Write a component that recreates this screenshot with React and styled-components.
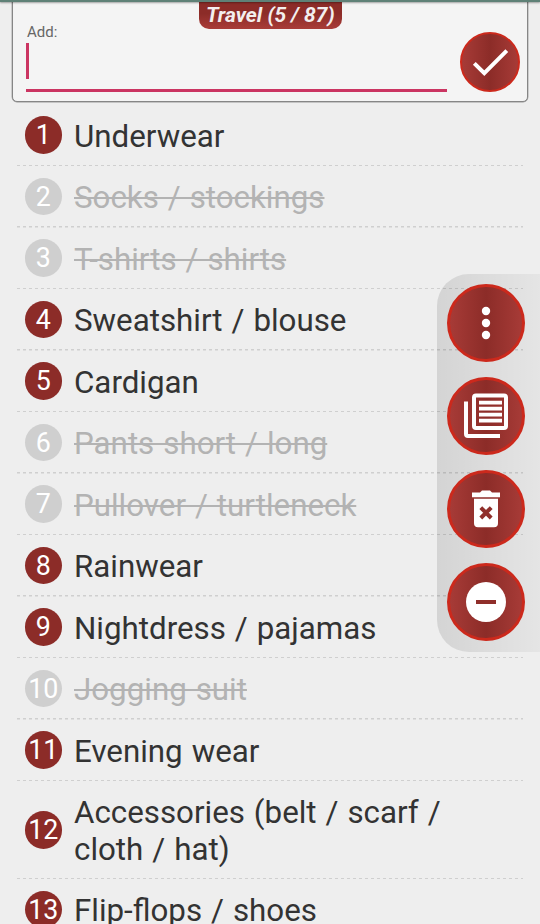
import React from "react";
import styled, { createGlobalStyle } from "styled-components";

const GlobalStyle = createGlobalStyle`
  html, body { margin: 0; padding: 0; background: #eeeeee; overflow: hidden; }
  * { box-sizing: border-box; }
`;

const Screen = styled.main`
  position: relative;
  width: 540px;
  height: 924px;
  overflow: hidden;
  background: #eeeeee;
  font-family: Roboto, sans-serif;
  color: #333;
`;

const StatusEdge = styled.div`
  position: absolute;
  inset: 0 0 auto;
  height: 1.5px;
  background: #5f8177;
  box-shadow: 0 1px 2px rgba(0, 0, 0, 0.35);
  z-index: 2;
`;

const AddPanel = styled.header`
  position: relative;
  display: flex;
  justify-content: space-between;
  width: 516px;
  height: 102px;
  margin-left: 12px;
  padding: 24px 6.6px 0 13px;
  background: #f4f4f4;
  border: 1.5px solid #868686;
  border-radius: 0 0 5px 5px;
  box-shadow: 0 0 0 0.4px #999;
`;

const Badge = styled.div`
  position: absolute;
  top: 0;
  left: 186px;
  width: 142.5px;
  height: 28px;
  border-radius: 0 0 10px 10px;
  background: linear-gradient(#8c2c28 45%, #a93c38);
  color: #f3eeee;
  font: italic 700 21px/29px Roboto, sans-serif;
  text-align: center;
  white-space: nowrap;
`;

const Field = styled.label`
  display: flex;
  flex-direction: column;
  width: 421px;
  height: 67px;
  border-bottom: 3px solid #cb3562;
`;

const FieldLabel = styled.span`
  padding-left: 1px;
  font-size: 15px;
  line-height: 15px;
  color: #666;
`;

const Caret = styled.span`
  width: 2.5px;
  height: 36px;
  margin-top: 3px;
  background: #cb3562;
`;

const RoundButton = styled.button`
  display: block;
  flex: none;
  width: ${(p) => p.$size}px;
  height: ${(p) => p.$size}px;
  padding: 0;
  border: ${(p) => p.$edge}px solid #cc291c;
  border-radius: 50%;
  background: linear-gradient(90deg, #a93c38, #8c2c28 50%, #a93c38) border-box;

  svg {
    display: block;
    margin: -${(p) => p.$edge}px;
  }
`;

const ConfirmButton = styled(RoundButton)`
  margin-top: 6.8px;
`;

const List = styled.ol`
  list-style: none;
  margin: 2.75px 0 0 17px;
  padding: 0;
  width: 506px;
`;

const Item = styled.li`
  display: flex;
  align-items: center;
  height: ${(p) => (p.$tall ? 98 : 61.5)}px;
  padding: 0 60px 0 7.5px;
  background: repeating-linear-gradient(90deg, #cfcfcf 0 3px, transparent 3px 6px)
    0 100% / 100% 1.5px no-repeat;
`;

const Num = styled.span`
  flex: none;
  width: 37.5px;
  height: 37.5px;
  margin-bottom: 1px;
  border-radius: 50%;
  background: ${(p) => (p.$done ? "#cfcfcf" : "#8c2c28")};
  color: #fff;
  font-size: 26.8px;
  line-height: 38px;
  text-align: center;
`;

const Title = styled.span`
  margin: 3px 0 0 12px;
  font-size: 31.3px;
  line-height: 36.5px;
  word-spacing: 1.2px;
  color: ${(p) => (p.$done ? "#b3b3b3" : "#333")};
  text-decoration: ${(p) => (p.$done ? "line-through 2px" : "none")};
`;

const ActionPanel = styled.aside`
  position: absolute;
  top: 274px;
  right: 0;
  display: flex;
  flex-direction: column;
  gap: 15px;
  width: 103.5px;
  height: 377.5px;
  padding: 10.3px 0 0 10.4px;
  border-radius: 32px 0 0 32px;
  background: linear-gradient(90deg, rgba(0, 0, 0, 0.11), rgba(0, 0, 0, 0.04));
`;

const items = [
  ["Underwear", false],
  ["Socks / stockings", true],
  ["T-shirts / shirts", true],
  ["Sweatshirt / blouse", false],
  ["Cardigan", false],
  ["Pants short / long", true],
  ["Pullover / turtleneck", true],
  ["Rainwear", false],
  ["Nightdress / pajamas", false],
  ["Jogging suit", true],
  ["Evening wear", false],
  ["Accessories (belt / scarf / cloth / hat)", false, true],
  ["Flip-flops / shoes", false],
];

const actions = [
  {
    label: "More",
    icon: (
      <g fill="#fff">
        <circle cx="39" cy="27" r="4.2" />
        <circle cx="39" cy="39" r="4.2" />
        <circle cx="39" cy="51" r="4.2" />
      </g>
    ),
  },
  {
    label: "Lists",
    icon: (
      <g fill="none" stroke="#fff" strokeWidth="4">
        <rect x="27" y="18.6" width="32" height="32.4" rx="2" />
        <path d="M19 24.6V57a2 2 0 0 0 2 2H53" />
        <path d="M32 25.6H55M32 31.6H55M32 37.6H55M32 43.6H55" strokeWidth="3.8" />
      </g>
    ),
  },
  {
    label: "Delete",
    icon: (
      <g>
        <path
          fill="#fff"
          d="M25 22.5H33L35 20.4H43L45 22.5H53V27.3H25ZM27 28.8H51V53.2a4 4 0 0 1-4 4H31a4 4 0 0 1-4-4Z"
        />
        <path d="M33.8 37.6 44.2 48M44.2 37.6 33.8 48" stroke="#8f2e2a" strokeWidth="4" />
      </g>
    ),
  },
  {
    label: "Remove",
    icon: (
      <g>
        <circle cx="39" cy="39" r="20" fill="#fff" />
        <path d="M29 39H49" stroke="#8f2e2a" strokeWidth="4" />
      </g>
    ),
  },
];

export default function App() {
  return (
    <Screen>
      <GlobalStyle />
      <StatusEdge />
      <AddPanel>
        <Field>
          <FieldLabel>Add:</FieldLabel>
          <Caret />
        </Field>
        <ConfirmButton $size={60} $edge={2.5} aria-label="Confirm">
          <svg width="60" height="60" viewBox="0 0 60 60">
            <path d="M14.3 31.3 24.3 41.2 46.8 18.7" fill="none" stroke="#fff" strokeWidth="4" />
          </svg>
        </ConfirmButton>
        <Badge>Travel (5 / 87)</Badge>
      </AddPanel>
      <List>
        {items.map(([name, done, tall], i) => (
          <Item key={name} $tall={tall}>
            <Num $done={done}>{i + 1}</Num>
            <Title $done={done}>{name}</Title>
          </Item>
        ))}
      </List>
      <ActionPanel>
        {actions.map((a) => (
          <RoundButton key={a.label} $size={78} $edge={3} aria-label={a.label}>
            <svg width="78" height="78" viewBox="0 0 78 78">
              {a.icon}
            </svg>
          </RoundButton>
        ))}
      </ActionPanel>
    </Screen>
  );
}
